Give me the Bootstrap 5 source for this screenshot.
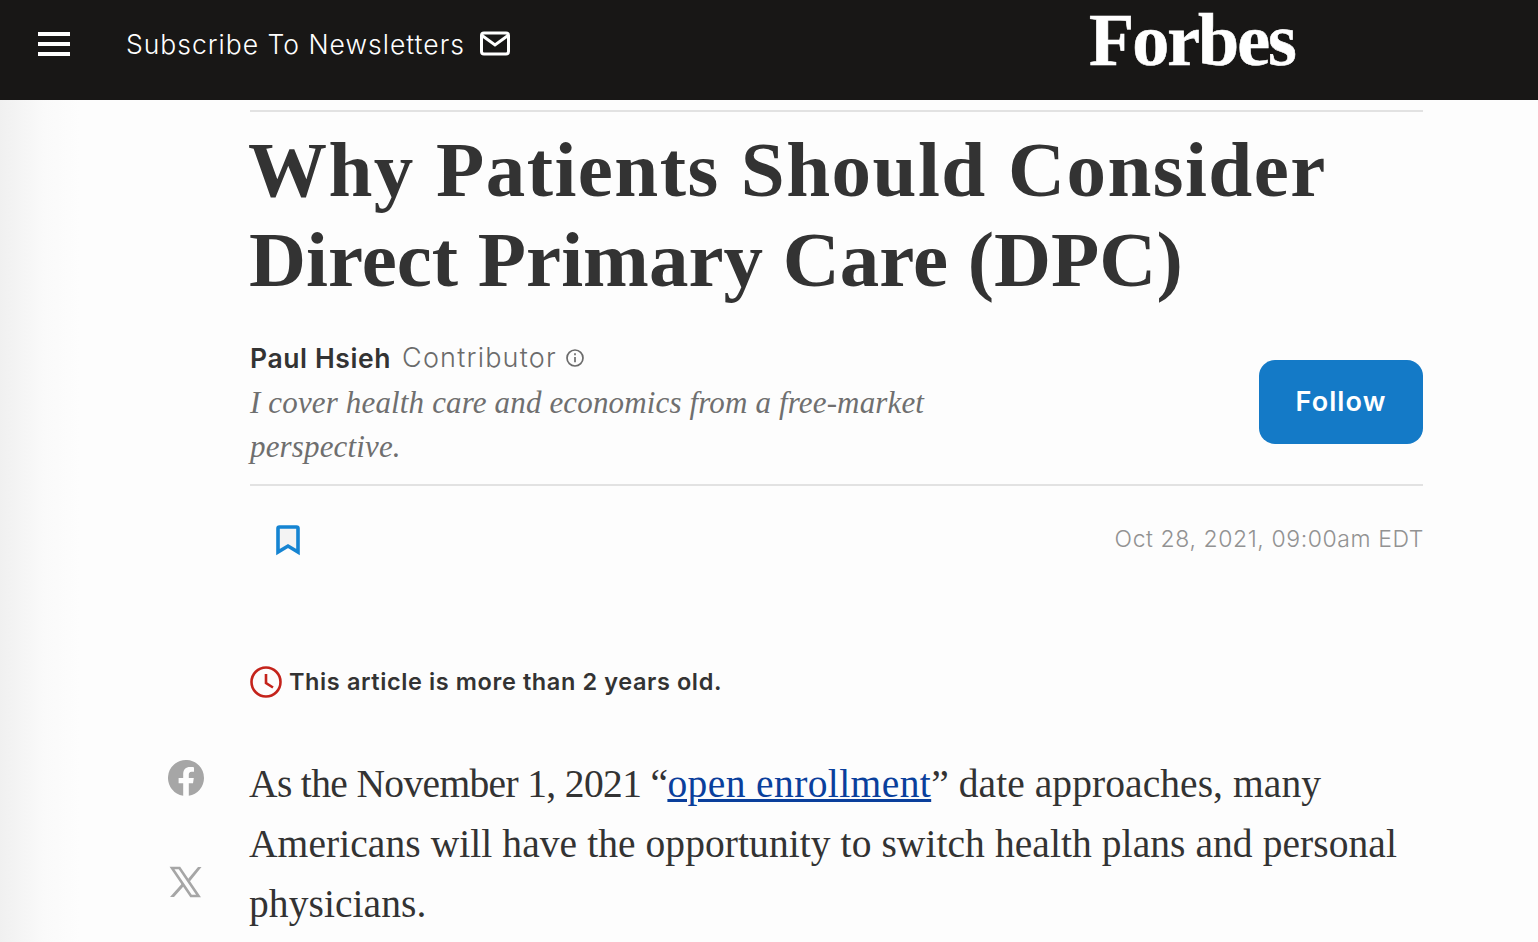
<!DOCTYPE html>
<html lang="en">
<head>
<meta charset="utf-8">
<title>Why Patients Should Consider Direct Primary Care (DPC)</title>
<link href="https://cdn.jsdelivr.net/npm/bootstrap@5.3.0/dist/css/bootstrap.min.css" rel="stylesheet">
<style>
html,body{height:100%;overflow:hidden}
body{background:linear-gradient(90deg,#f0f0f0 0,#fafafa 45px,#fdfdfd 80px);font-family:"Inter","Liberation Sans",sans-serif;color:#333}
.fb-bar{background:#181716;height:100px;padding:0}
.fb-burger{width:32px;margin-left:38px;margin-top:-13px;gap:6px}
.fb-burger i{display:block;height:4px;background:#fff}
.fb-sub{margin-left:56px;margin-top:-13px;color:#fff;font-size:26.5px;letter-spacing:1px;line-height:32px;text-decoration:none;font-weight:300}
.fb-mail{margin-left:15px}
.fb-logo{position:absolute;left:1089px;top:0;font:700 74px/80px "Liberation Serif",serif;letter-spacing:-2px;color:#fff;-webkit-text-stroke:.6px #fff}
.fb-head{margin-left:250px;width:1173px}
.fb-top{border-top:2px solid #e2e2e2;margin-top:10px}
.fb-title{font:700 79px/90px "Liberation Serif",serif;color:#333;margin:13px 0 0 -2px}
.fb-line-a,.fb-line-b{display:block}
.fb-line-a{letter-spacing:1.45px}
.fb-line-b{letter-spacing:0;margin-left:1px}
.fb-author{margin-top:31px;padding-bottom:16px;border-bottom:2px solid #e2e2e2}
.fb-name{font-size:26.5px;line-height:44px;font-weight:600;color:#333;letter-spacing:.6px}
.fb-role{font-size:27px;line-height:44px;color:#6b6b6b;font-weight:300;margin-left:11px;letter-spacing:1.2px}
.fb-bio{font:italic 400 31px/44px "Liberation Serif",serif;color:#6f6f6f;width:700px;letter-spacing:.15px;margin-top:1px;margin-bottom:-1px}
.fb-follow{width:164px;height:84px;border-radius:16px;background:#147ac7;border:0;color:#fff;font-size:27px;font-weight:600;letter-spacing:1.1px}
.fb-meta{height:108px;padding-left:25px}
.fb-date{font-size:23px;color:#929292;font-weight:300;letter-spacing:.58px;margin-top:-2px;margin-right:-1px}
.fb-old{margin-top:70px;height:36px;font-size:23.5px;font-weight:600;color:#333;gap:7px;letter-spacing:.6px}
.fb-body{margin-top:54px}
.fb-rail{width:81px;padding-left:168px;box-sizing:content-box;padding-top:6px;gap:70px}
.fb-text{width:1174px;font:400 39.5px/60px "Liberation Serif",serif;color:#333;margin:0;letter-spacing:.07px}
.fb-text a{color:#0a3f9c;letter-spacing:.4px}
.fb-lead{letter-spacing:-.64px}
</style>
</head>
<body>
<nav class="navbar fb-bar align-items-center justify-content-start position-relative flex-nowrap">
  <div class="fb-burger d-flex flex-column"><i></i><i></i><i></i></div>
  <a class="fb-sub d-flex align-items-center" href="#">Subscribe To Newsletters
    <svg class="fb-mail" width="30" height="26" viewBox="0 0 30 26" fill="none" stroke="#fff" stroke-width="3"><rect x="1.500" y="2" width="27" height="21" rx="2.500"/><path d="M2 4.500 15 14 28 4.500"/></svg>
  </a>
  <span class="fb-logo">Forbes</span>
</nav>
<main>
  <header class="fb-head">
    <div class="fb-top"></div>
    <h1 class="fb-title"><span class="fb-line-a">Why Patients Should Consider</span><span class="fb-line-b">Direct Primary Care (DPC)</span></h1>
    <div class="fb-author d-flex justify-content-between align-items-center">
      <div>
        <div class="d-flex align-items-center">
          <span class="fb-name">Paul Hsieh</span><span class="fb-role">Contributor</span>
          <svg class="ms-2" width="20" height="20" viewBox="0 0 20 20" fill="none" stroke="#6b6b6b" stroke-width="1.700"><circle cx="10" cy="10" r="8"/><path d="M10 9v5.200"/><path d="M10 5.200v2"/></svg>
        </div>
        <div class="fb-bio">I cover health care and economics from a free-market perspective.</div>
      </div>
      <button class="btn fb-follow" type="button">Follow</button>
    </div>
    <div class="fb-meta d-flex justify-content-between align-items-center">
      <svg width="26" height="31" viewBox="0 0 26 31"><path d="M3 3.500Q3 2 4.500 2h17Q23 2 23 3.500V27l-10-6-10 6Z" fill="#f3f3f3" stroke="#1584d2" stroke-width="3.600"/></svg>
      <span class="fb-date">Oct 28, 2021, 09:00am EDT</span>
    </div>
    <div class="fb-old d-flex align-items-center">
      <svg width="32" height="32" viewBox="0 0 32 32" fill="none" stroke="#c4231b" stroke-width="2.600"><circle cx="16" cy="16" r="14.500"/><path d="M16 8v9l7 4.500"/></svg>
      <span>This article is more than 2 years old.</span>
    </div>
  </header>
  <section class="fb-body d-flex">
    <div class="fb-rail d-flex flex-column flex-shrink-0">
      <svg width="36" height="36" viewBox="0 0 36 36"><path fill="#a6a6a6" d="M36 18a18 18 0 1 0-20.800 17.800V23.200h-4.600V18h4.600v-4c0-4.500 2.700-7 6.800-7 2 0 4 .4 4 .4v4.400h-2.300c-2.200 0-2.900 1.400-2.900 2.800V18h5l-.8 5.200h-4.200v12.600A18 18 0 0 0 36 18Z"/></svg>
      <svg width="34" height="32" viewBox="0 0 34 32"><path fill="none" stroke="#a6a6a6" stroke-width="2.600" d="M4 2h7.500l19 28H23Z"/><path fill="#a6a6a6" d="M2 31 14 17.500l1.800 2.400L6 31ZM20 13 30 1h3.500L21.800 15.400Z"/></svg>
    </div>
    <p class="fb-text"><span class="fb-lead">As the November 1, 2021 “</span><a href="#">open enrollment</a>” date approaches, many Americans will have the opportunity to switch health plans and personal physicians.</p>
  </section>
</main>
<script src="https://cdn.jsdelivr.net/npm/bootstrap@5.3.0/dist/js/bootstrap.bundle.min.js"></script>
</body>
</html>
